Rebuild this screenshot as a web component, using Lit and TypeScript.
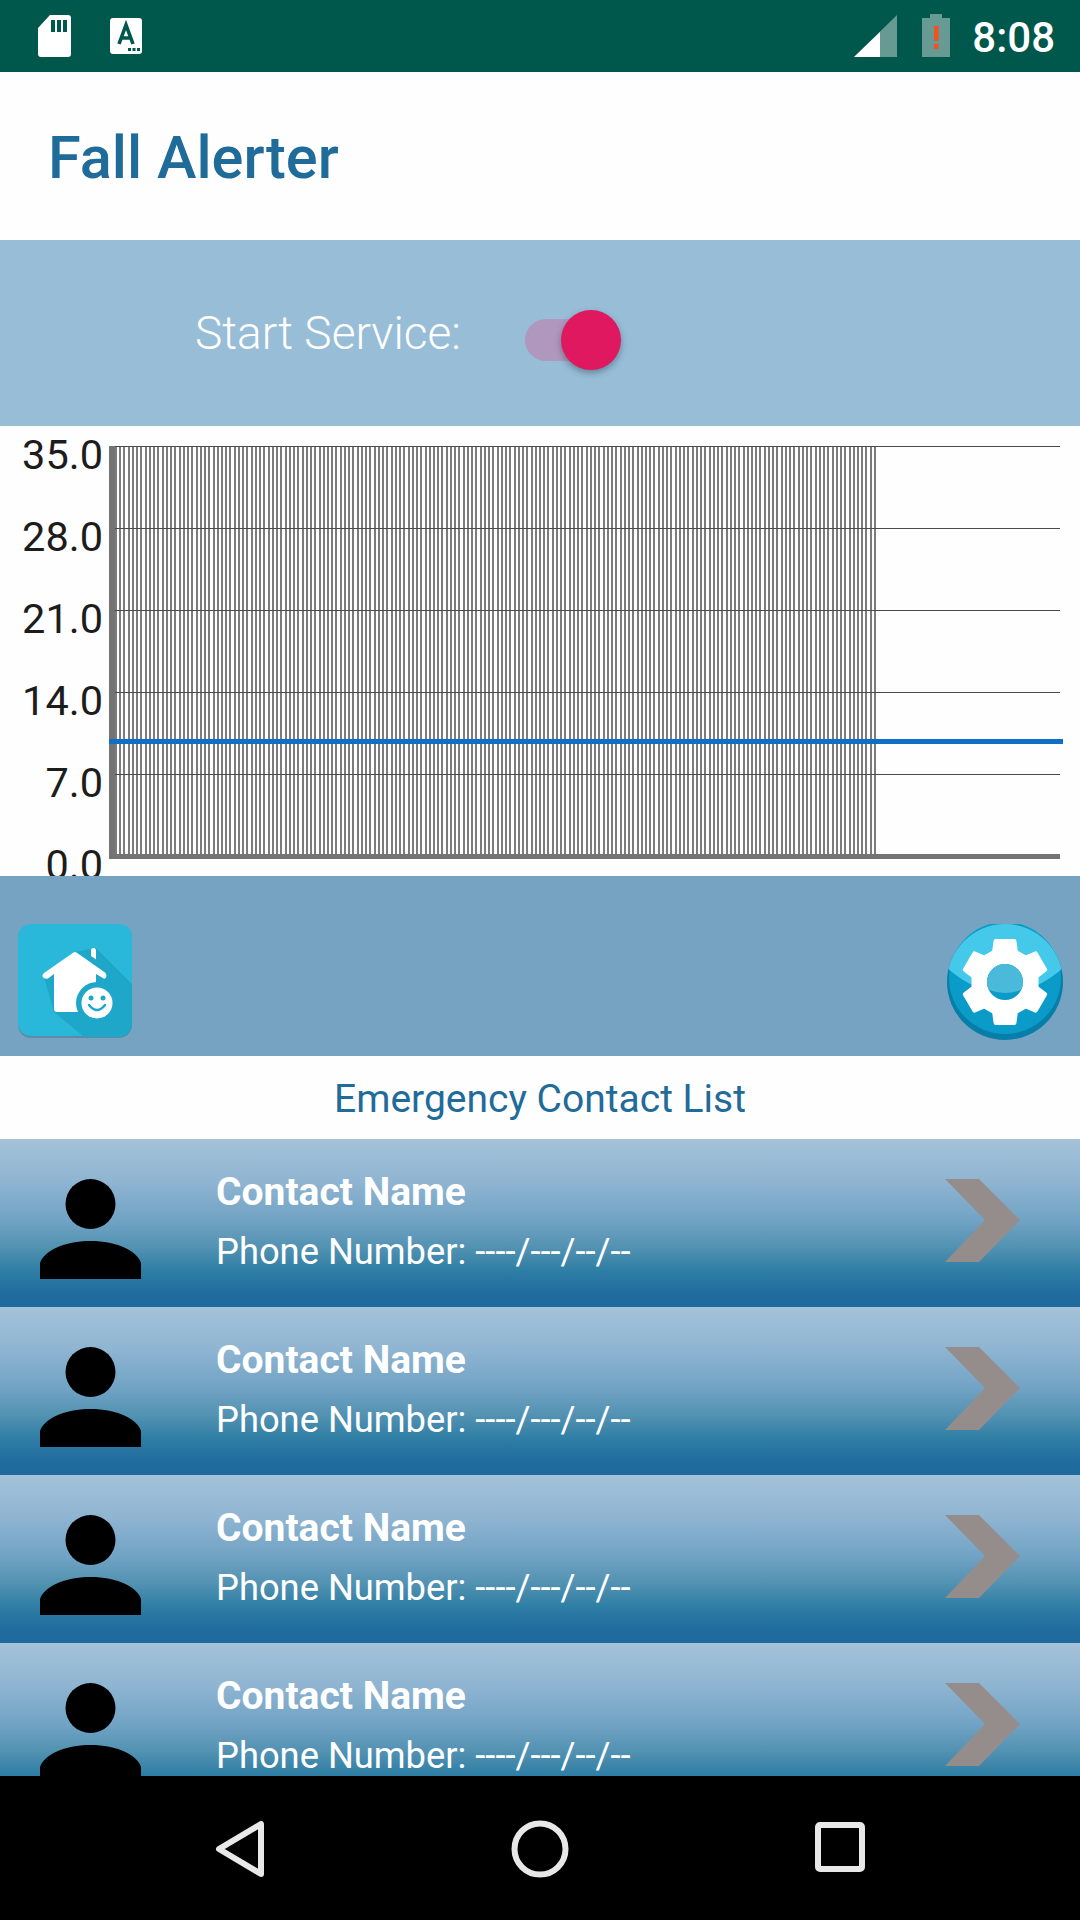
import { LitElement, html, css, svg } from "lit";
import { customElement } from "lit/decorators.js";

function gearPath(cx: number, cy: number, ro: number, ri: number): string {
  const pts: string[] = [];
  for (let i = 0; i < 6; i++) {
    const a = -90 + i * 60;
    const offs: [number, number][] = [
      [-20, ri],
      [-13, ro],
      [13, ro],
      [20, ri],
    ];
    for (const [d, r] of offs) {
      const t = ((a + d) * Math.PI) / 180;
      pts.push(`${(cx + r * Math.cos(t)).toFixed(1)},${(cy + r * Math.sin(t)).toFixed(1)}`);
    }
  }
  return pts.join(" ");
}

@customElement("app-root")
export class AppRoot extends LitElement {
  static styles = css`
    :host {
      display: block;
      width: 1080px;
      height: 1920px;
      overflow: hidden;
      font-family: Roboto, "Liberation Sans", sans-serif;
      background: #fefefe;
    }
    .page { display: flex; flex-direction: column; height: 1920px; }
    .status {
      height: 72px; flex: none; background: #00574b;
      display: flex; align-items: flex-start; padding: 14px 25px 0 38px; box-sizing: border-box;
    }
    .status .sim { margin-right: 39px; margin-top: 1px; }
    .status .acc { margin-top: 4px; }
    .status .signal { margin-left: auto; margin-top: 1px; }
    .status .batt { margin-left: 25px; }
    .time { margin-left: 22px; font-size: 42px; line-height: 46px; font-weight: 500; color: #fff; margin-top: 1px; }
    .title {
      height: 168px; flex: none; box-sizing: border-box; padding: 3px 0 0 48px;
      display: flex; align-items: center;
      font-size: 59.500px; font-weight: 500; color: #1f6b99;
    }
    .service {
      height: 186px; flex: none; background: #98bdd7; box-sizing: border-box;
      display: flex; align-items: center; padding-left: 195px; color: #fff;
    }
    .service span { font-size: 46px; font-weight: 300; width: 330px; }
    .switch { position: relative; width: 96px; height: 60px; margin-top: 14px; }
    .track { position: absolute; left: 0; top: 9px; width: 81px; height: 42px; border-radius: 21px; background: #b097bd; }
    .thumb {
      position: absolute; left: 36px; top: 0; width: 60px; height: 60px; border-radius: 50%;
      background: #e0185f; box-shadow: 0 3px 6px rgba(40, 60, 80, 0.45);
    }
    .chart {
      height: 450px; flex: none; overflow: hidden; box-sizing: border-box; padding-top: 20px;
      display: flex;
    }
    .labels { width: 103px; flex: none; margin-top: -32px; }
    .labels div {
      height: 82px; line-height: 82px; text-align: right; font-size: 41.500px; color: #1c1c1c;
    }
    .plot { margin-left: 6px; display: block; }
    .tools {
      height: 180px; flex: none; background: #76a3c1; box-sizing: border-box;
      display: flex; justify-content: space-between; align-items: flex-start;
      padding: 48px 17px 0 18px;
    }
    .heading {
      height: 83px; flex: none; display: flex; align-items: center; justify-content: center;
      font-size: 39px; color: #1f6b99; box-sizing: border-box; padding-top: 3px;
    }
    .list { flex: none; height: 637px; overflow: hidden; }
    .row {
      height: 168px; box-sizing: border-box; display: flex; color: #fff;
      background: linear-gradient(180deg, #a4c2d9 0%, #8fb5d2 25%, #72a3c4 48%, #4f90b0 66%, #2f7ea5 78%, #1f6b9e 93%, #1f6b9e 100%);
    }
    .avatar { width: 216px; flex: none; padding: 40px 0 0 40px; box-sizing: border-box; }
    .info { flex: 1; padding-top: 28px; }
    .name { font-size: 39px; font-weight: 700; line-height: 50px; }
    .phone { font-size: 36.300px; line-height: 48px; margin-top: 11px; font-weight: 400; }
    .chev { flex: none; margin: 40px 60px 0 0; }
    .nav {
      height: 144px; flex: none; background: #000; box-sizing: border-box;
      display: flex; align-items: flex-start; padding-top: 44px; padding-left: 215px;
    }
    .nav .home { margin-left: 246px; }
    .nav .recent { margin-left: 246px; margin-top: 2px; }
  `;

  private contact() {
    return html`<div class="row">
      <div class="avatar">
        <svg width="102" height="102" viewBox="0 0 102 102">
          <ellipse cx="50.500" cy="25" rx="25" ry="25" fill="#000"></ellipse>
          <path d="M0 100V84C4 72 24 62 50.500 62C77 62 97 72 101 84V100Z" fill="#000"></path>
        </svg>
      </div>
      <div class="info">
        <div class="name">Contact Name</div>
        <div class="phone">Phone Number: ----/---/--/--</div>
      </div>
      <svg class="chev" width="75" height="83" viewBox="0 0 75 83">
        <path d="M0 0H34L75 41L34 83H0L40 41Z" fill="#958d8c"></path>
      </svg>
    </div>`;
  }

  render() {
    const labels = ["35.0", "28.0", "21.0", "14.0", "7.0", "0.0"];
    const grid = [0, 82, 164, 246, 328];
    const bars = Array.from({ length: 180 }, (_, i) => Math.round(6 + i * 4.24));
    return html`<div class="page">
      <div class="status">
        <svg class="sim" width="33" height="42" viewBox="0 0 33 42">
          <path d="M12 0H30A3 3 0 0 1 33 3V39A3 3 0 0 1 30 42H3A3 3 0 0 1 0 39V13Z" fill="#fff"></path>
          <rect x="13" y="5" width="4" height="12" fill="#00574b"></rect>
          <rect x="19" y="5" width="4" height="12" fill="#00574b"></rect>
          <rect x="25" y="5" width="4" height="12" fill="#00574b"></rect>
        </svg>
        <svg class="acc" width="32" height="36" viewBox="0 0 32 36">
          <rect width="32" height="36" rx="3" fill="#fff"></rect>
          <path d="M9 26L16 7L23 26M11.500 20H20.500" fill="none" stroke="#00574b" stroke-width="3.600"></path>
          <rect x="18" y="30" width="3" height="3" fill="#00574b"></rect>
          <rect x="22.500" y="30" width="3" height="3" fill="#00574b"></rect>
          <rect x="27" y="30" width="3" height="3" fill="#00574b"></rect>
        </svg>
        <svg class="signal" width="43" height="42" viewBox="0 0 43 42">
          <path d="M43 0V42H0Z" fill="#fff" fill-opacity="0.4"></path>
          <path d="M26 17V42H0Z" fill="#fff"></path>
        </svg>
        <svg class="batt" width="28" height="43" viewBox="0 0 28 43">
          <path d="M8 0H20V4H28V43H0V4H8Z" fill="#fff" fill-opacity="0.4"></path>
          <rect x="12" y="12" width="4.500" height="15" fill="#f4511e"></rect>
          <rect x="12" y="30" width="4.500" height="5" fill="#f4511e"></rect>
        </svg>
        <div class="time">8:08</div>
      </div>
      <div class="title">Fall Alerter</div>
      <div class="service">
        <span>Start Service:</span>
        <div class="switch"><div class="track"></div><div class="thumb"></div></div>
      </div>
      <div class="chart">
        <div class="labels">${labels.map((l) => html`<div>${l}</div>`)}</div>
        <svg class="plot" width="964" height="420" viewBox="0 0 964 420">
          ${bars.map((x) => svg`<rect x=${x} y="0" width="2" height="408" fill="#7c7c7c"></rect>`)}
          ${grid.map((y) => svg`<rect x="0" y=${y} width="951" height="1" fill="#4a4a4a"></rect>`)}
          <rect x="0" y="0" width="6" height="413" fill="#737373"></rect>
          <rect x="1" y="408" width="950" height="5" fill="#737373"></rect>
          <rect x="0" y="293" width="954" height="5" fill="#0f6fc6"></rect>
        </svg>
      </div>
      <div class="tools">
        <svg width="114" height="114" viewBox="0 0 114 114">
          <defs>
            <clipPath id="tile"><rect width="114" height="113" rx="13"></rect></clipPath>
          </defs>
          <rect y="1" width="114" height="113" rx="13" fill="#5e8aa6"></rect>
          <rect width="114" height="112" rx="13" fill="#29b8d9"></rect>
          <g clip-path="url(#tile)">
            <path d="M78 24L114 60V113H66L36 88L26 53L57 28Z" fill="#1ea7c9"></path>
          </g>
          <path d="M55.500 28.500Q57 27.500 58.500 28.500L87 48.500Q90 52 87 54.500Q85.500 55 84 53.500L78 50V88H39Q36 88 36 85V50L30 54.500Q26 55.500 24.500 52.500Q24 50.500 26 49Z" fill="#fff"></path>
          <path d="M73 26.500A2.500 2.500 0 0 1 78 26.500V35.500L73 32Z" fill="#fff"></path>
          <circle cx="79" cy="79" r="21" fill="#1ea7c9"></circle>
          <circle cx="79" cy="79" r="15.500" fill="#fff"></circle>
          <circle cx="73" cy="74" r="2.500" fill="#1ea7c9"></circle>
          <circle cx="85" cy="74" r="2.500" fill="#1ea7c9"></circle>
          <path d="M71 81Q79 91 87 81" fill="none" stroke="#1ea7c9" stroke-width="2.500" stroke-linecap="round"></path>
        </svg>
        <svg width="116" height="116" viewBox="0 0 116 116">
          <defs>
            <clipPath id="disc"><circle cx="58" cy="58" r="58"></circle></clipPath>
          </defs>
          <circle cx="58" cy="58" r="58" fill="#077ea8"></circle>
          <circle cx="58" cy="54" r="56" fill="#0a9bc8"></circle>
          <g clip-path="url(#disc)">
            <path d="M0 0H116V44Q58 94 0 44Z" fill="#45c9ea"></path>
          </g>
          <polygon points=${gearPath(58, 58, 42, 32)} fill="#fff" stroke="#fff" stroke-width="4" stroke-linejoin="round"></polygon>
          <circle cx="58" cy="58" r="18" fill="#0a9bc8"></circle>
          <path d="M40 58A18 18 0 0 1 76 58A18 18 0 0 1 74 66Q58 72 42 66A18 18 0 0 1 40 58Z" fill="#4ab9da"></path>
        </svg>
      </div>
      <div class="heading">Emergency Contact List</div>
      <div class="list">${[0, 1, 2, 3].map(() => this.contact())}</div>
      <div class="nav">
        <svg width="50" height="58" viewBox="0 0 50 58">
          <path d="M46 4V54L4 29Z" fill="none" stroke="#e8e8e8" stroke-width="6" stroke-linejoin="round"></path>
        </svg>
        <svg class="home" width="58" height="58" viewBox="0 0 58 58">
          <circle cx="29" cy="29" r="25.500" fill="none" stroke="#e8e8e8" stroke-width="6"></circle>
        </svg>
        <svg class="recent" width="50" height="50" viewBox="0 0 50 50">
          <rect x="3" y="3" width="44" height="44" rx="2" fill="none" stroke="#e8e8e8" stroke-width="6"></rect>
        </svg>
      </div>
    </div>`;
  }
}
